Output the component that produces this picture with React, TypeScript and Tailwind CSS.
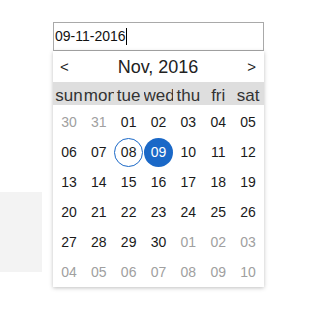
import React from "react";

const weekdays = ["sun", "mon", "tue", "wed", "thu", "fri", "sat"];

type Day = { d: string; other?: boolean; sel?: "ring" | "fill" };

const rows: Day[][] = [
  [{ d: "30", other: true }, { d: "31", other: true }, { d: "01" }, { d: "02" }, { d: "03" }, { d: "04" }, { d: "05" }],
  [{ d: "06" }, { d: "07" }, { d: "08", sel: "ring" }, { d: "09", sel: "fill" }, { d: "10" }, { d: "11" }, { d: "12" }],
  [{ d: "13" }, { d: "14" }, { d: "15" }, { d: "16" }, { d: "17" }, { d: "18" }, { d: "19" }],
  [{ d: "20" }, { d: "21" }, { d: "22" }, { d: "23" }, { d: "24" }, { d: "25" }, { d: "26" }],
  [{ d: "27" }, { d: "28" }, { d: "29" }, { d: "30" }, { d: "01", other: true }, { d: "02", other: true }, { d: "03", other: true }],
  [{ d: "04", other: true }, { d: "05", other: true }, { d: "06", other: true }, { d: "07", other: true }, { d: "08", other: true }, { d: "09", other: true }, { d: "10", other: true }],
];

function Cell({ day }: { day: Day }) {
  let inner = "text-[#1a1a1a]";
  if (day.other) inner = "text-[#a0a0a0]";
  if (day.sel === "ring") inner = "text-[#1a1a1a] border border-[#1a68c7] rounded-full";
  if (day.sel === "fill") inner = "text-white bg-[#1a68c7] rounded-full";
  return (
    <div className="h-[30px] w-[30px] flex items-center justify-center">
      <div className={`h-[29px] w-[29px] flex items-center justify-center ${inner}`}>{day.d}</div>
    </div>
  );
}

export default function App() {
  return (
    <div
      className="relative w-[334px] h-[319px] bg-white overflow-hidden"
      style={{ fontFamily: '"Liberation Sans", Arial, sans-serif' }}
    >
      <div className="pt-[192px]">
        <div className="w-[42px] h-[80px] bg-[#f3f3f3]" />
      </div>

      <div className="absolute left-[53px] top-[22px] w-[211px]">
        <div className="h-[29px] border border-[#a9a9a9] bg-white flex items-center pl-[1px] text-[14px] text-[#111]">
          <span>09-11-2016</span>
          <span className="inline-block w-[1px] h-[17px] bg-black" />
        </div>
        <div className="bg-white shadow-[0_1px_4px_rgba(0,0,0,0.25)]">
          <div className="h-[31px] flex items-center justify-between pl-[7px] pr-[8px] pt-[2px] text-[#222]">
            <span className="text-[15px]">&lt;</span>
            <span className="text-[18px]">Nov, 2016</span>
            <span className="text-[15px]">&gt;</span>
          </div>
          <div className="grid grid-cols-7 bg-[#dedede] h-[23px] px-[1px] pt-[4px]">
            {weekdays.map((w) => (
              <div key={w} className="overflow-hidden whitespace-nowrap text-center text-[17px] leading-[19px] text-[#333]">
                {w}
              </div>
            ))}
          </div>
          <div className="pt-[2px] px-[1px] text-[14px]">
            {rows.map((r, i) => (
              <div key={i} className="flex">
                {r.map((day, j) => (
                  <Cell key={j} day={day} />
                ))}
              </div>
            ))}
          </div>
        </div>
      </div>
    </div>
  );
}
